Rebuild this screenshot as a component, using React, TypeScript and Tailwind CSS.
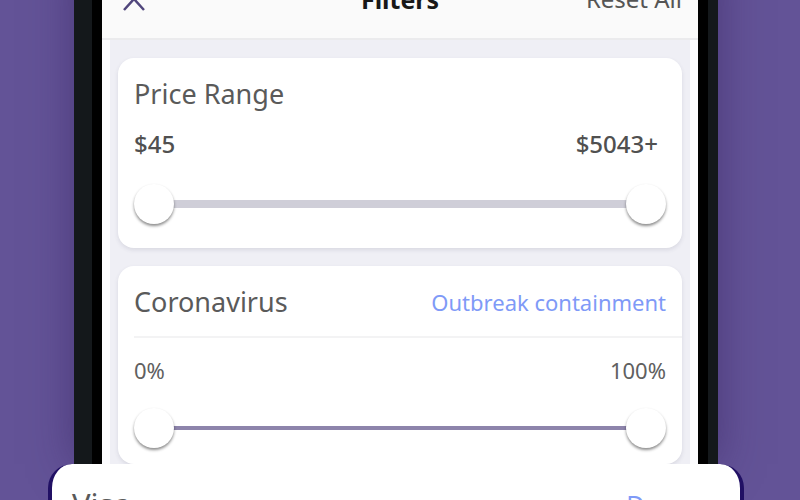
import React, { useState } from 'react';

interface RangeSliderProps {
  label: string;
  min: number;
  max: number;
  trackClass: string;
}

const thumbInput =
  'pointer-events-none col-start-1 row-start-1 h-10 w-full appearance-none bg-transparent outline-none ' +
  '[&::-webkit-slider-thumb]:pointer-events-auto [&::-webkit-slider-thumb]:size-10 [&::-webkit-slider-thumb]:appearance-none ' +
  '[&::-webkit-slider-thumb]:rounded-full [&::-webkit-slider-thumb]:bg-white ' +
  '[&::-webkit-slider-thumb]:shadow-[0_2px_3px_rgba(0,0,0,0.45)]';

// Two native ranges share one grid cell so each thumb stays draggable.
const RangeSlider: React.FC<RangeSliderProps> = ({ label, min, max, trackClass }) => {
  const [low, setLow] = useState(min);
  const [high, setHigh] = useState(max);

  return (
    <div className="grid items-center">
      <div className={`col-start-1 row-start-1 mx-5 ${trackClass}`} />
      <input
        type="range"
        aria-label={`${label} minimum`}
        min={min}
        max={max}
        value={low}
        onChange={(e) => setLow(Math.min(Number(e.target.value), high))}
        className={thumbInput}
      />
      <input
        type="range"
        aria-label={`${label} maximum`}
        min={min}
        max={max}
        value={high}
        onChange={(e) => setHigh(Math.max(Number(e.target.value), low))}
        className={thumbInput}
      />
    </div>
  );
};

const Header: React.FC = () => (
  <header className="-mt-10 grid h-20 grid-cols-3 items-center border-b-2 border-[#ebebed] bg-[#fafafa] px-4">
    <button type="button" aria-label="Close" className="size-8">
      <svg viewBox="0 0 32 32" className="size-8" fill="none" stroke="#50467c" strokeWidth="2.5">
        <path d="M6 5 L26 27 M26 5 L6 27" />
      </svg>
    </button>
    <h1 className="text-center text-[25px] leading-8 font-bold text-[#181818]">Filters</h1>
    <button type="button" className="justify-self-end text-2xl leading-8 text-[#555555]">
      Reset All
    </button>
  </header>
);

const card = 'rounded-2xl bg-white px-4 shadow-[0_2px_4px_rgba(60,55,90,0.12)]';
const title = 'text-[27px] leading-9 text-[#5a5a5a]';

export default function App() {
  return (
    <div className="h-screen overflow-hidden bg-[#635397] pr-14 pl-12 font-['Noto_Sans',sans-serif]">
      <div className="mx-[26px] border-r-[10px] border-l-[18px] border-[#14181b] shadow-[0_0_40px_rgba(50,30,90,0.5)]">
        <div className="border-x-[10px] border-black bg-[#efeff5]">
          <Header />
          <main className="border-x-8 border-[#fcfcfe] px-2 pt-[18px]">
            <section className={`${card} pt-[18px] pb-6`}>
              <h2 className={title}>Price Range</h2>
              <div className="mt-4 mb-6 flex justify-between pr-2 text-2xl leading-8 font-medium text-[#505050]">
                <span>$45</span>
                <span>$5043+</span>
              </div>
              <RangeSlider label="Price" min={45} max={5043} trackClass="h-2 bg-[#cfced8]" />
            </section>
            <section className={`${card} mt-[18px] pt-[18px] pb-4`}>
              <div className="-mr-4 flex items-center justify-between border-b-2 border-[#f3f3f4] pr-4 pb-4">
                <h2 className={title}>Coronavirus</h2>
                <a href="#containment" className="text-[22px] leading-8 text-[#7f9af7]">
                  Outbreak containment
                </a>
              </div>
              <div className="mt-4 mb-[22px] flex justify-between text-[22px] leading-8 text-[#606060]">
                <span>0%</span>
                <span>100%</span>
              </div>
              <RangeSlider label="Coronavirus containment" min={0} max={100} trackClass="h-1 bg-[#8d84ab]" />
            </section>
          </main>
        </div>
      </div>
      <section className="flex items-center justify-between rounded-t-3xl border-x-4 border-[#211064] bg-white px-5 pt-5 pb-4">
        <h2 className="text-[31px] leading-10 text-[#5a5a5a]">Visa</h2>
        <a href="#degree" className="pr-2 text-[25px] leading-10 text-[#7f9af7]">
          Degree
        </a>
      </section>
    </div>
  );
}
